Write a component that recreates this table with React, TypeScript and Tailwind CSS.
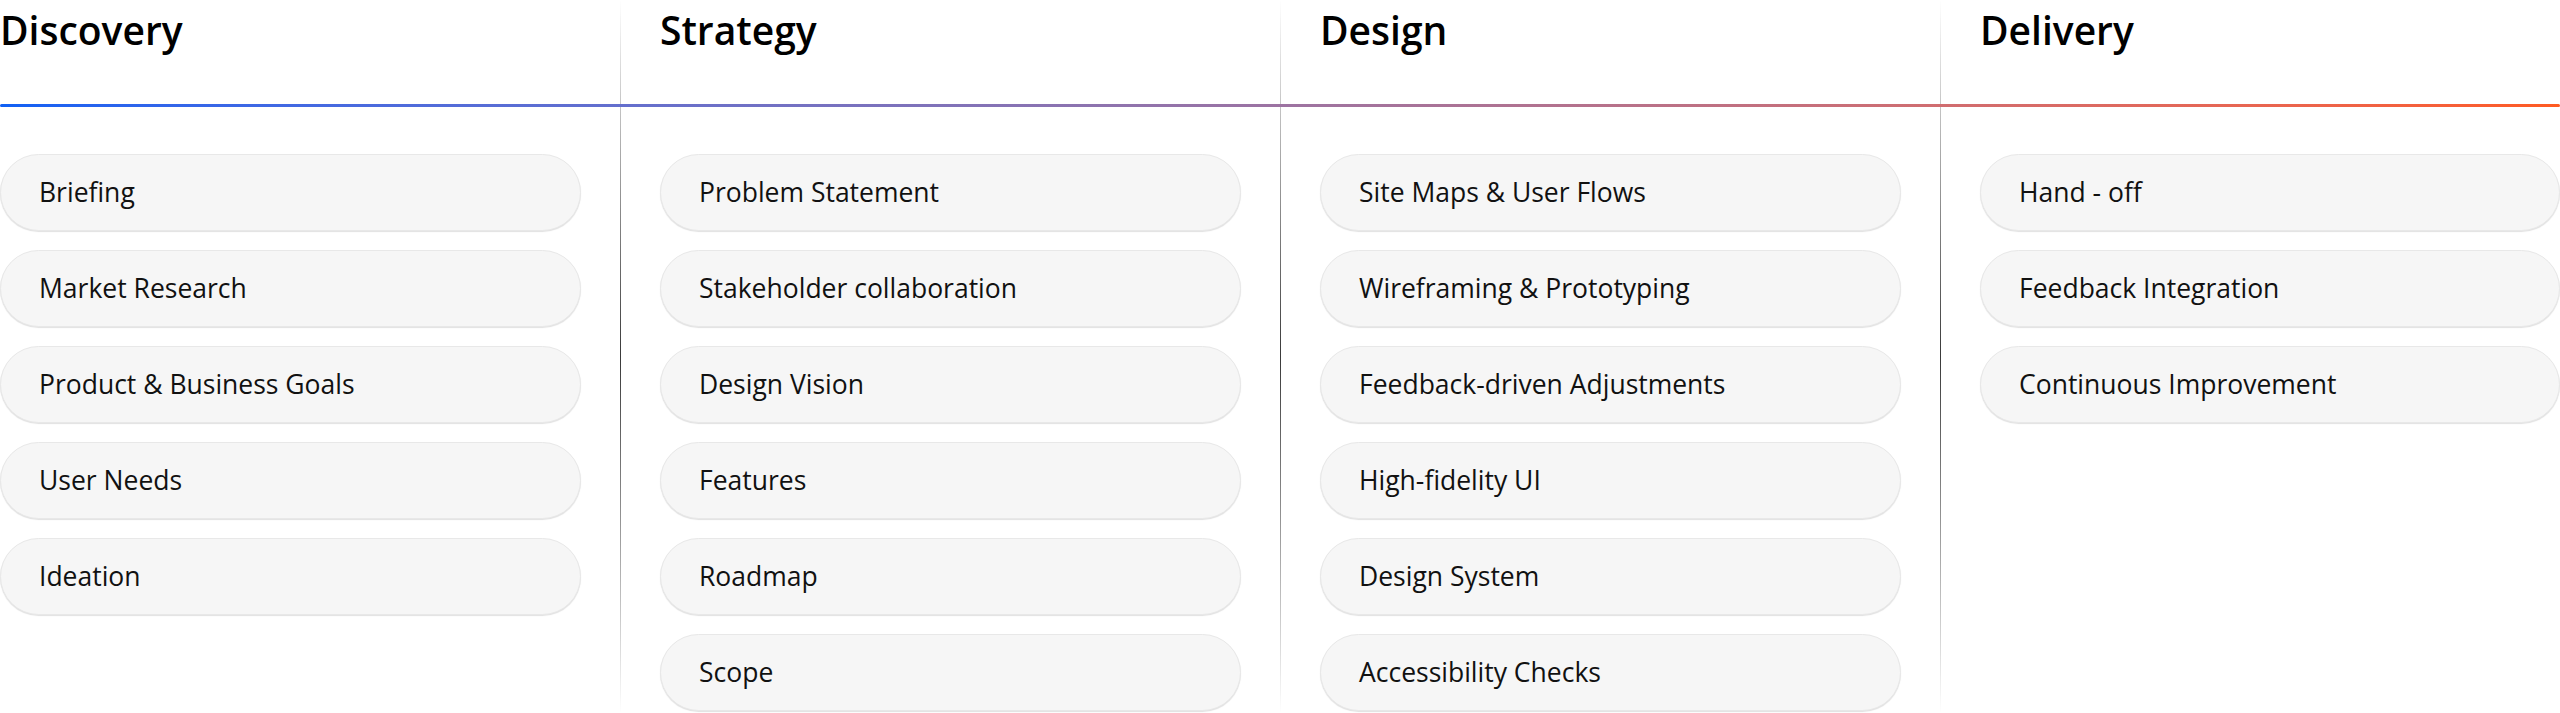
const columns = [
  {
    title: "Discovery",
    items: ["Briefing", "Market Research", "Product & Business Goals", "User Needs", "Ideation"],
  },
  {
    title: "Strategy",
    items: ["Problem Statement", "Stakeholder collaboration", "Design Vision", "Features", "Roadmap", "Scope"],
  },
  {
    title: "Design",
    items: [
      "Site Maps & User Flows",
      "Wireframing & Prototyping",
      "Feedback-driven Adjustments",
      "High-fidelity UI",
      "Design System",
      "Accessibility Checks",
    ],
  },
  {
    title: "Delivery",
    items: ["Hand - off", "Feedback Integration", "Continuous Improvement"],
  },
];

const headingCols = ["col-start-1", "col-start-3", "col-start-5", "col-start-7"];
const dividerCols = ["col-start-2", "col-start-4", "col-start-6"];

function Pill({ label }: { label: string }) {
  return (
    <div className="h-[77px] rounded-full bg-[#f6f6f6] border border-[#e8e8e8] shadow-[0_1px_1px_rgba(0,0,0,0.12)] flex items-center pl-[38px]">
      <span className="text-[26.5px] text-[#111] font-['Open_Sans',sans-serif]">{label}</span>
    </div>
  );
}

export default function App() {
  return (
    <div className="w-[2560px] h-[713px] bg-white overflow-hidden">
      <div className="grid grid-cols-[581px_79px_581px_79px_581px_79px_580px] grid-rows-[104px_3px_auto]">
        {columns.map((col, i) => (
          <h2
            key={col.title}
            className={`${headingCols[i]} row-start-1 pt-[7px] text-[39px] leading-[46px] font-semibold text-black font-['Open_Sans',sans-serif]`}
          >
            {col.title}
          </h2>
        ))}

        {dividerCols.map((c) => (
          <div key={c} className={`${c} row-start-1 row-end-4 flex justify-center`}>
            <div className="w-px h-[713px] bg-linear-to-b from-transparent via-[#3a3a3a] to-transparent" />
          </div>
        ))}

        <div className="col-start-1 col-end-8 row-start-2 h-[3px] rounded-full bg-linear-to-r from-[#0f60f4] to-[#ff5a20]" />

        {columns.map((col, i) => (
          <div key={col.title + "-items"} className={`${headingCols[i]} row-start-3 pt-[47px] flex flex-col gap-[19px]`}>
            {col.items.map((item) => (
              <Pill key={item} label={item} />
            ))}
          </div>
        ))}
      </div>
    </div>
  );
}
